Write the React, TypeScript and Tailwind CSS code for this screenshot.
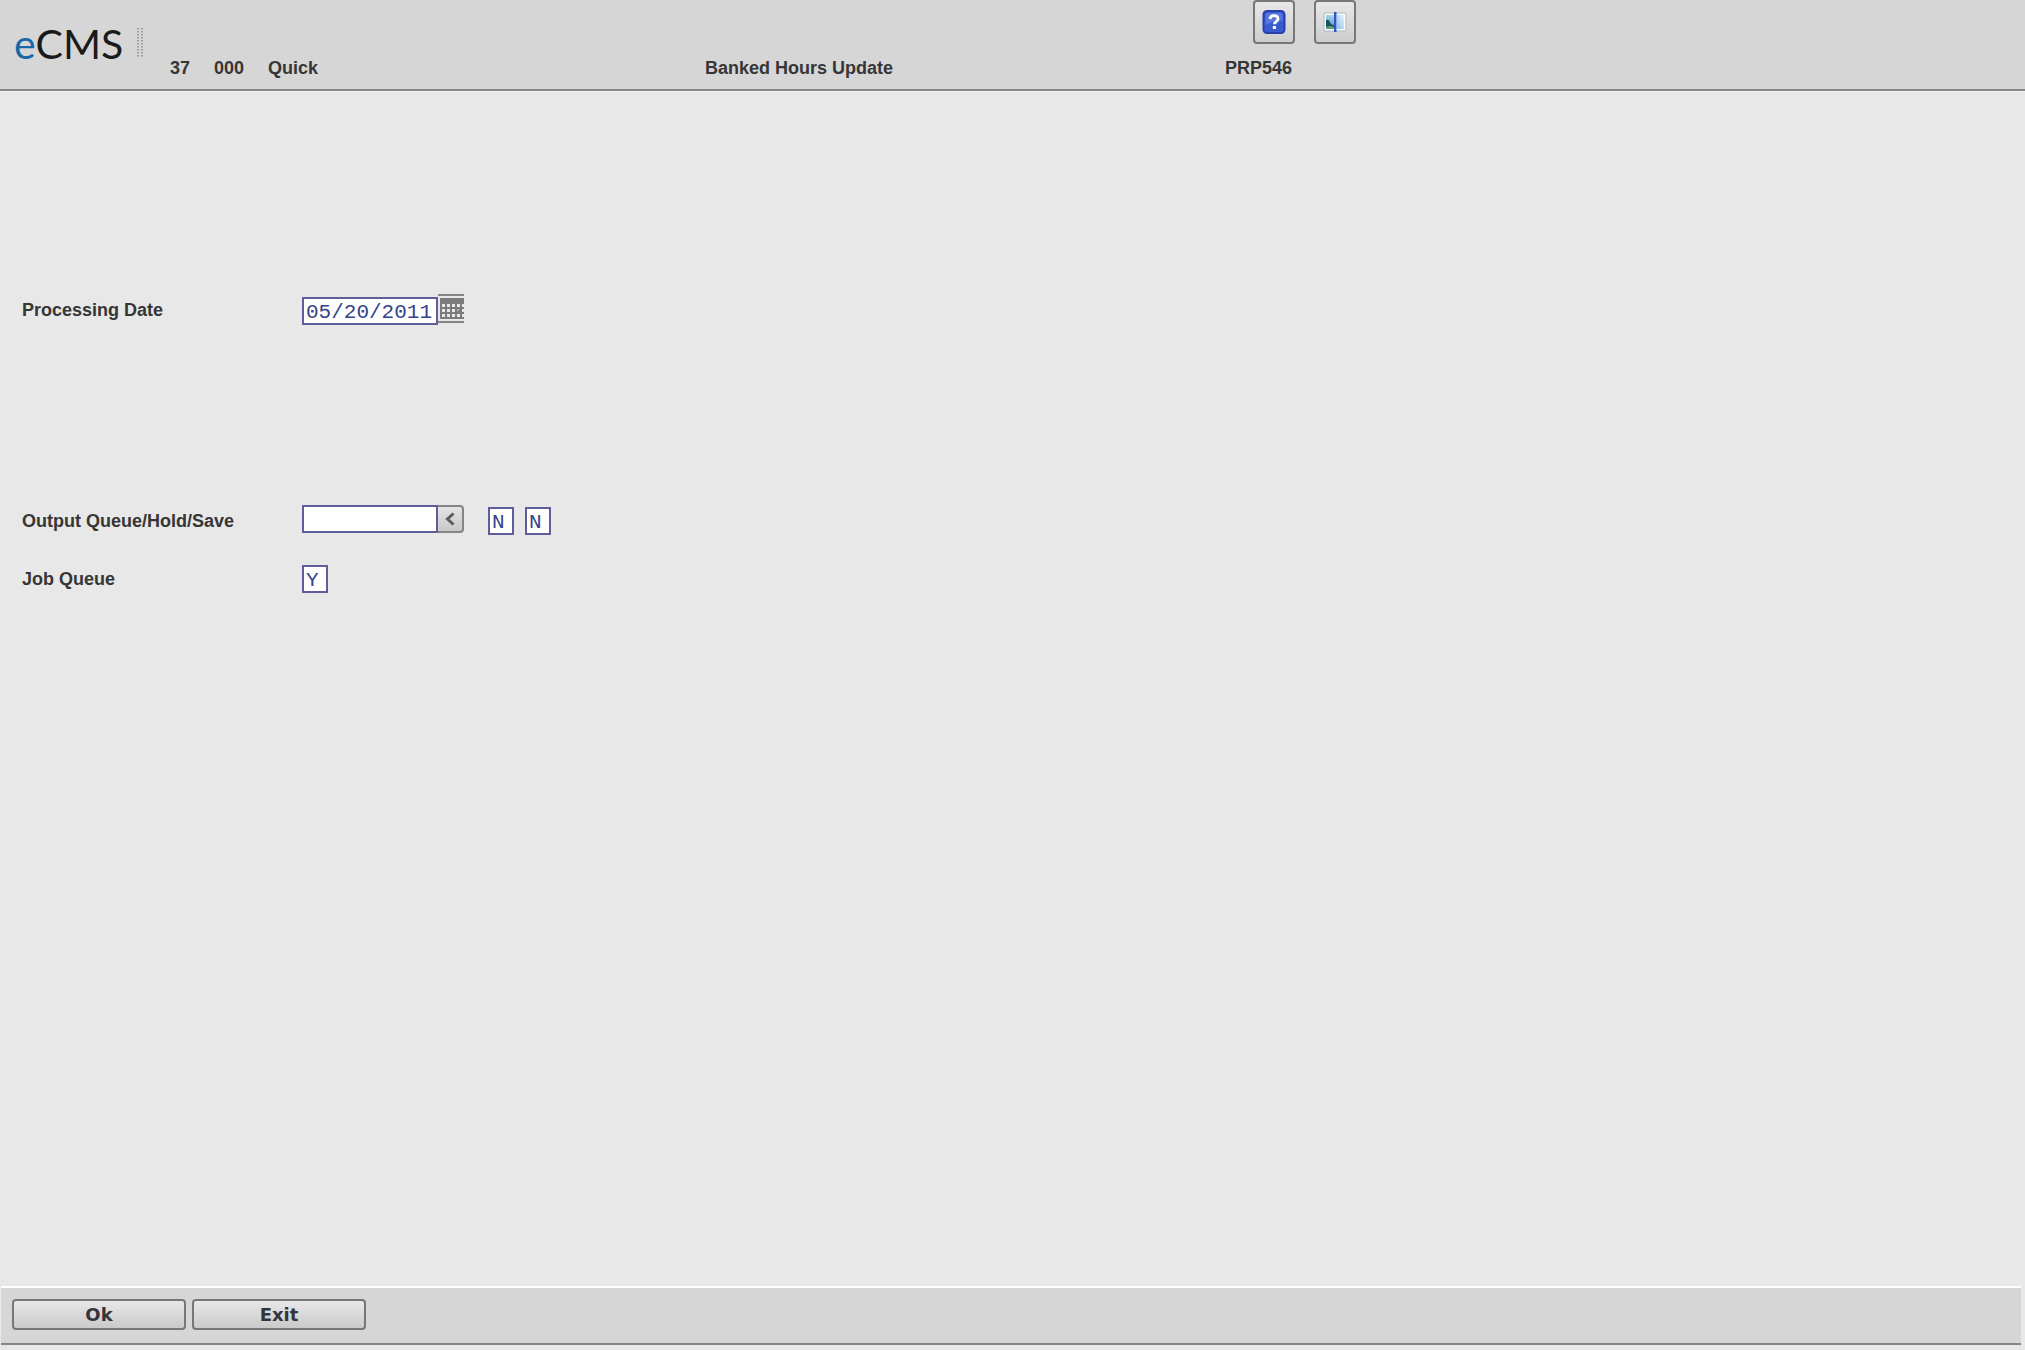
import React from "react";

const label = "font-['Liberation_Sans',sans-serif] text-[18px] leading-6 font-bold text-[#363636]";
const field =
  "block border-2 border-[#5f5d9a] bg-white h-7 px-[2px] pt-[2px] font-['Liberation_Mono',monospace] text-[21px] leading-[22px] text-[#35438c] outline-none";
const toolButton =
  "flex h-11 w-[42px] items-center justify-center rounded border-2 border-[#777] bg-linear-to-b from-[#e8e8e8] to-[#cdcdcd]";
const footerButton =
  "h-[31px] w-[174px] rounded-[4px] border-2 border-[#777] bg-linear-to-b from-[#e8e8e8] to-[#cacaca] font-['DejaVu_Sans',sans-serif] text-[18px] leading-6 font-bold text-[#34343c]";

function HelpIcon() {
  return (
    <svg width="24" height="26" viewBox="0 0 24 26" aria-hidden="true">
      <rect x="1.500" y="2" width="21" height="22" rx="3.500" fill="#3a5bd0" stroke="#2a3fae" strokeWidth="2" />
      <path d="M3.500 6q0-2 2-2h13q2 0 2 2v6q-8-1-17 4z" fill="#6f8ee8" opacity="0.55" />
      <path d="M8 10c.2-2.200 1.600-3.300 4-3.300s4 1.200 4 3.200c0 2.600-3.600 2.700-3.600 5.400" fill="none" stroke="#fff" strokeWidth="2.800" />
      <rect x="10.800" y="17" width="3.200" height="3" fill="#fff" />
    </svg>
  );
}

function PanelsIcon() {
  return (
    <svg width="24" height="24" viewBox="0 0 24 24" aria-hidden="true">
      <defs>
        <linearGradient id="sky" x1="0" y1="0" x2="0" y2="1">
          <stop offset="0" stopColor="#a9d3ee" />
          <stop offset="1" stopColor="#4f97c4" />
        </linearGradient>
        <linearGradient id="pale" x1="0" y1="1" x2="1" y2="0">
          <stop offset="0" stopColor="#8fc3ee" />
          <stop offset="1" stopColor="#e6f4fc" />
        </linearGradient>
      </defs>
      <rect x="1" y="3" width="22" height="18" rx="1" fill="#f6fafc" stroke="#a9bac2" />
      <rect x="3" y="5" width="8" height="14" fill="url(#sky)" />
      <path d="M3 10q3-1 4 2t4 3v2H3z" fill="#1b5260" />
      <path d="M3 17q4-2 8 0v2H3z" fill="#5fa07a" />
      <rect x="14" y="5" width="7" height="14" fill="url(#pale)" />
      <rect x="11" y="2" width="2.500" height="20" fill="#3456c4" />
    </svg>
  );
}

function CalendarIcon() {
  return (
    <svg width="26" height="30" viewBox="0 0 26 30" aria-hidden="true">
      <path d="M0 1h26M0 28h26" stroke="#858585" strokeWidth="2" />
      <rect x="2" y="4" width="24" height="21" fill="#7b7b7b" />
      <path
        d="M4 10h3v3H4zM9 10h3v3H9zM14 10h3v3h-3zM19 10h3v3h-3zM24 10h2v3h-2zM4 15h3v3H4zM9 15h3v3H9zM14 15h3v3h-3zM24 15h2v3h-2zM4 20h3v3H4zM9 20h3v3H9zM14 20h3v3h-3zM19 20h3v3h-3zM24 20h2v3h-2z"
        fill="#e8e8e8"
      />
      <path d="M19 15h3l-3 3z" fill="#b5b5b5" />
    </svg>
  );
}

function Grip() {
  return (
    <svg width="6" height="30" viewBox="0 0 6 30" aria-hidden="true">
      <path d="M1 0v30M5 0v30" stroke="#8a8a8a" strokeWidth="1.500" strokeDasharray="1.500 1.500" />
    </svg>
  );
}

export default function App() {
  return (
    <div className="flex min-h-screen flex-col bg-[#e8e8e8]">
      {/* Title bar */}
      <header className="flex h-[91px] border-b-2 border-[#868686] bg-[#d6d6d6]">
        <div className="flex w-[170px] items-start gap-[14px] pt-7 pl-[14px]">
          <div className="font-['Lato',sans-serif] text-[41px] leading-8 text-[#1a1a1a]">
            <span className="text-[#1468a8]">e</span>CMS
          </div>
          <Grip />
        </div>
        <div className={`flex w-[535px] gap-6 pt-14 ${label}`}>
          <span>37</span>
          <span>000</span>
          <span>Quick</span>
        </div>
        <h1 className={`w-[520px] pt-14 ${label}`}>Banked Hours Update</h1>
        <div>
          <div className="flex gap-[19px] pl-7">
            <button type="button" aria-label="Help" className={toolButton}>
              <HelpIcon />
            </button>
            <button type="button" aria-label="Panels" className={toolButton}>
              <PanelsIcon />
            </button>
          </div>
          <div className={`pt-3 ${label}`}>PRP546</div>
        </div>
      </header>

      {/* Parameters */}
      <main className="flex-1 border-t border-[#f2f2f2] pt-[202px] pl-[22px]">
        <div className="flex h-8 items-start">
          <label htmlFor="date" className={`w-[280px] pt-1 ${label}`}>
            Processing Date
          </label>
          <input id="date" defaultValue="05/20/2011" className={`mt-[3px] w-[136px] ${field}`} />
          <button type="button" aria-label="Pick a date">
            <CalendarIcon />
          </button>
        </div>
        <div className="mt-[179px] flex h-8 items-start">
          <label htmlFor="queue" className={`w-[280px] pt-1 ${label}`}>
            Output Queue/Hold/Save
          </label>
          <input id="queue" defaultValue="" className={`w-[136px] ${field}`} />
          <button
            type="button"
            aria-label="Choose a queue"
            className="flex h-7 w-[26px] items-center justify-center rounded-r border-2 border-l-0 border-[#858585] bg-linear-to-b from-[#e4e4e4] to-[#c8c8c8]"
          >
            <svg width="12" height="14" viewBox="0 0 12 14" aria-hidden="true">
              <path d="M9.500 1.500L3.500 7l6 5.500" fill="none" stroke="#5c5c5c" strokeWidth="3" />
            </svg>
          </button>
          <div className="flex gap-[11px] pt-[2px] pl-6">
            <input aria-label="Hold" defaultValue="N" className={`w-[26px] ${field}`} />
            <input aria-label="Save" defaultValue="N" className={`w-[26px] ${field}`} />
          </div>
        </div>
        <div className="mt-7 flex h-8 items-start">
          <label htmlFor="job" className={`w-[280px] pt-[2px] ${label}`}>
            Job Queue
          </label>
          <input id="job" defaultValue="Y" className={`w-[26px] ${field}`} />
        </div>
      </main>

      {/* Actions */}
      <footer className="mr-1 mb-[5px] ml-px flex h-[59px] gap-[6px] border-t-2 border-b-2 border-t-white border-b-[#868686] bg-[#d6d6d6] pt-[11px] pl-[11px]">
        <button type="button" className={footerButton}>
          Ok
        </button>
        <button type="button" className={footerButton}>
          Exit
        </button>
      </footer>
    </div>
  );
}
